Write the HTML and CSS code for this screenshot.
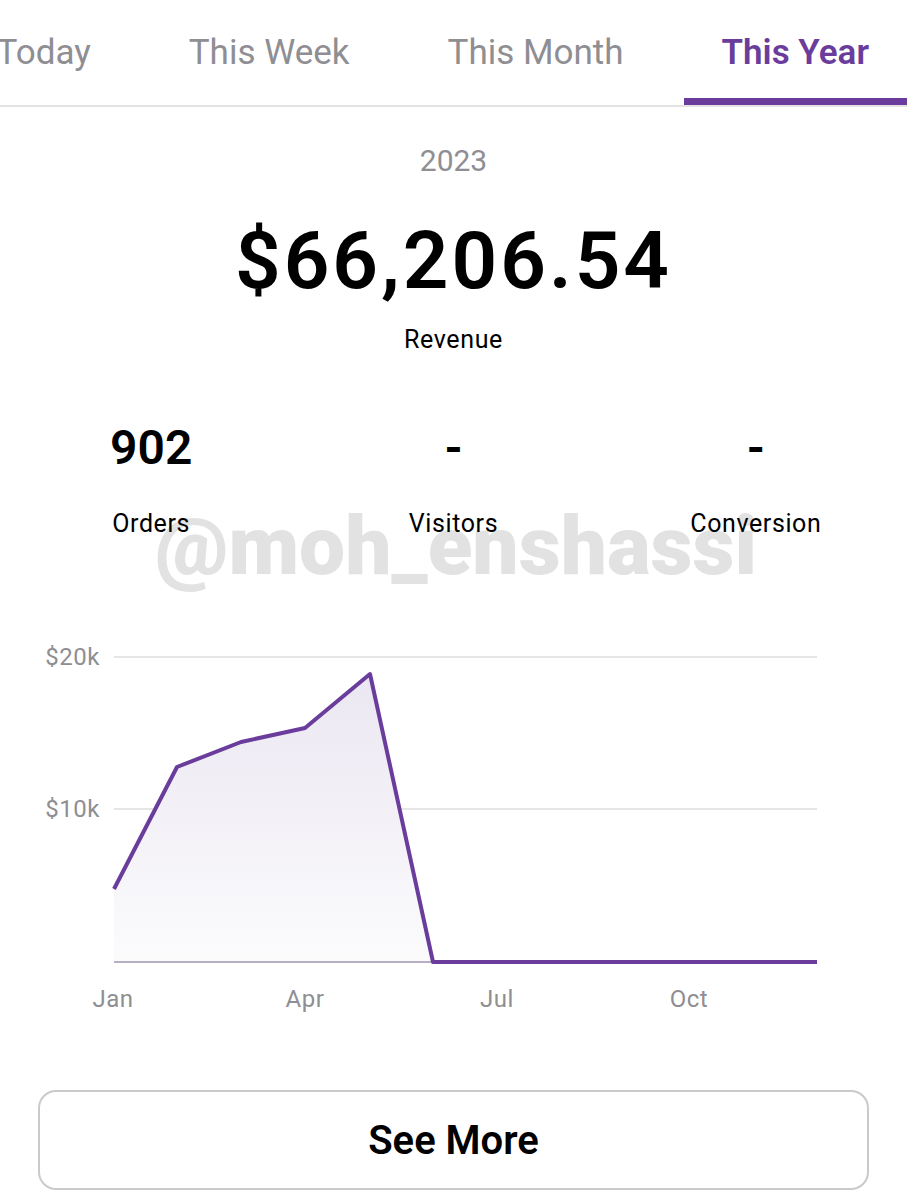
FILE: index.html
```html
<!DOCTYPE html>
<html lang="en">
<head>
<meta charset="utf-8">
<title>Analytics - This Year</title>
<link rel="stylesheet" href="styles.css">
</head>
<body>
<div class="page">
  <nav class="tabs">
    <div class="tab">Today</div>
    <div class="tab">This Week</div>
    <div class="tab">This Month</div>
    <div class="tab active">This Year</div>
  </nav>

  <section class="summary">
    <div class="period">2023</div>
    <div class="amount">$66,206.54</div>
    <div class="amount-label">Revenue</div>
  </section>

  <section class="stats">
    <div class="stat">
      <div class="stat-value">902</div>
      <div class="stat-label">Orders</div>
    </div>
    <div class="stat">
      <div class="stat-value">-</div>
      <div class="stat-label">Visitors</div>
    </div>
    <div class="stat">
      <div class="stat-value">-</div>
      <div class="stat-label">Conversion</div>
    </div>
    <div class="watermark">@moh_enshassi</div>
  </section>

  <section class="chart">
    <svg class="chart-svg" width="907" height="400" viewBox="0 0 907 400" xmlns="http://www.w3.org/2000/svg">
      <defs>
        <linearGradient id="areaFill" x1="0" y1="0" x2="0" y2="1">
          <stop offset="0" stop-color="#ebe7f2"/>
          <stop offset="1" stop-color="#fbfbfc"/>
        </linearGradient>
      </defs>
      <line class="grid" x1="114" y1="26" x2="817" y2="26"/>
      <line class="grid" x1="114" y1="178" x2="817" y2="178"/>
      <path d="M114 258 L177 136 L241 111 L305 97 L370 43 L433 331 L114 331 Z" fill="url(#areaFill)"/>
      <line class="base" x1="114" y1="331" x2="817" y2="331"/>
      <polyline class="series" points="114,258 177,136 241,111 305,97 370,43 433,331 817,331"/>
      <text class="ylab" x="100" y="34" text-anchor="end">$20k</text>
      <text class="ylab" x="100" y="186" text-anchor="end">$10k</text>
      <text class="xlab" x="113" y="376" text-anchor="middle">Jan</text>
      <text class="xlab" x="305" y="376" text-anchor="middle">Apr</text>
      <text class="xlab" x="497" y="376" text-anchor="middle">Jul</text>
      <text class="xlab" x="689" y="376" text-anchor="middle">Oct</text>
    </svg>
  </section>

  <div class="actions">
    <button class="see-more" type="button">See More</button>
  </div>
</div>
</body>
</html>
```

FILE: styles.css
```css
* { box-sizing: border-box; }

html, body {
  margin: 0;
  padding: 0;
  background: #ffffff;
}

body {
  font-family: Roboto, "Noto Sans", "Liberation Sans", sans-serif;
  color: #000000;
  width: 907px;
  overflow: hidden;
}

.page {
  width: 907px;
}

/* Tabs */
.tabs {
  display: flex;
  justify-content: flex-end;
  gap: 22px;
  height: 107px;
  border-bottom: 2px solid #e3e3e3;
  overflow: hidden;
}

.tab {
  flex: none;
  display: flex;
  align-items: center;
  padding: 6px 38px 0;
  height: 105px;
  font-size: 35px;
  color: #8e8e93;
  border-bottom: 7px solid transparent;
  white-space: nowrap;
}

.tab.active {
  color: #6a3d9c;
  font-weight: 600;
  border-bottom-color: #6a3d9c;
}

/* Summary */
.summary {
  display: flex;
  flex-direction: column;
  align-items: center;
  padding-top: 37px;
}

.period {
  font-size: 30px;
  line-height: 34px;
  color: #8e8e93;
}

.amount {
  margin-top: 40px;
  font-size: 80px;
  line-height: 86px;
  font-weight: 600;
  letter-spacing: 3px;
}

.amount-label {
  margin-top: 21px;
  font-size: 25px;
  line-height: 30px;
  letter-spacing: 0.6px;
}

/* Stats */
.stats {
  position: relative;
  z-index: 0;
  display: grid;
  grid-template-columns: repeat(3, 1fr);
  padding-top: 66px;
}

.stat {
  display: flex;
  flex-direction: column;
  align-items: center;
}

.stat-value {
  font-size: 48px;
  line-height: 54px;
  font-weight: 600;
}

.stat-label {
  margin-top: 34px;
  font-size: 25px;
  line-height: 30px;
  letter-spacing: 0.6px;
}

.watermark {
  position: absolute;
  z-index: -1;
  left: 155px;
  top: 146px;
  font-size: 82px;
  line-height: 90px;
  font-weight: 900;
  color: #e2e2e2;
  white-space: nowrap;
  pointer-events: none;
}

/* Chart */
.chart {
  margin-top: 92px;
  height: 400px;
}

.chart-svg {
  display: block;
}

.grid {
  stroke: #dedede;
  stroke-width: 1.6;
}

.base {
  stroke: #b7b0c2;
  stroke-width: 2;
}

.series {
  fill: none;
  stroke: #6a3d9c;
  stroke-width: 4;
  stroke-linejoin: round;
  stroke-linecap: butt;
}

.ylab, .xlab {
  font-family: Roboto, "Noto Sans", sans-serif;
  font-size: 24px;
  letter-spacing: 0.5px;
  fill: #8e8e93;
}

/* Button */
.actions {
  padding: 59px 38px 0;
}

.see-more {
  display: block;
  width: 100%;
  height: 100px;
  border: 2px solid #cacaca;
  border-radius: 18px;
  background: #ffffff;
  font-family: Roboto, "Noto Sans", sans-serif;
  font-size: 40px;
  font-weight: 600;
  color: #000000;
}
```
